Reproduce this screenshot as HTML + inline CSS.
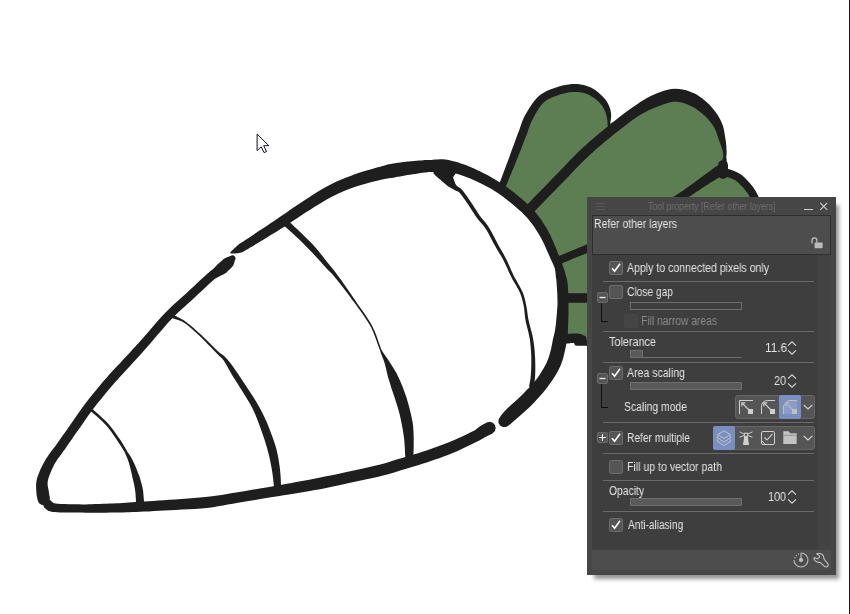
<!DOCTYPE html>
<html lang="en"><head><meta charset="utf-8"><title>Tool property - Refer other layers</title>
<style>
html,body{margin:0;padding:0}
body{width:850px;height:614px;background:#fff;position:relative;overflow:hidden;font-family:"Liberation Sans",sans-serif}
.art{position:absolute;left:0;top:0}
.edge{position:absolute;left:848.5px;top:0;width:1.5px;height:614px;background:#111}
.cursor{position:absolute;left:255.4px;top:131.8px}
.panel{position:absolute;left:587px;top:197px;width:249px;height:378px;background:#464646;box-shadow:5px 6px 4px -2px rgba(0,0,0,.42)}
.abs{position:absolute}
.hdr{position:absolute;left:5px;top:18px;width:237px;height:38px;background:#4d4d4d;border:1px solid #2e2e2e}
.body{position:absolute;left:5px;top:58px;width:226px;height:295px;background:#3e3e3e}
.track{position:absolute;left:231px;top:58px;width:13px;height:295px;background:#434343}
.foot{position:absolute;left:5px;top:352.6px;width:239px;height:20px;background:#4d4d4d}
.t,.ttl{position:absolute;white-space:nowrap;transform-origin:0 50%;will-change:transform}
.cb{position:absolute;width:12px;height:12px;border:1px solid #6b6b6b;background:#555;border-radius:2px;line-height:0}
.cb svg{position:absolute;left:-1px;top:-1px}
.cb.dis{border-color:#474747;background:#454545}
.sep{position:absolute;left:16px;width:211px;height:1px;background:#6a6a6a}
.sl{position:absolute;left:43px;width:110px;height:6px;border:1px solid #6e6e6e}
.sl.full{background:#5a5a5a}
.sl.empty{background:#3e3e3e}
.sl.part{border-color:transparent transparent #6e6e6e transparent}
.sl.part .knob{position:absolute;left:-1px;top:-1px;height:6px;border:1px solid #6e6e6e;background:#5a5a5a}
.spin{position:absolute}
.tg{position:absolute;width:9px;height:9px;border:1px solid #6b6b6b;background:#555;border-radius:2px;line-height:0}
.tg svg{position:absolute;left:-1px;top:-1px}
.tree{position:absolute;width:6px;border-left:1px solid #111;border-bottom:1px solid #111}
.grp{position:absolute;height:22px;border:1px solid #676767;background:#555;border-radius:3px}
.bt{position:absolute;height:24px}
.bt.sel{background:#7b8ec0;border-radius:2px}
</style></head>
<body>
<svg class="art" width="850" height="614" viewBox="0 0 850 614">
<path fill="#5d7d53" d="M503.0,184.0 L512.5,159.8 L522.0,134.8 L529.0,117.0 L541.0,99.5 L557.3,91.2 L574.8,87.9 L589.8,91.2 L601.5,100.0 L606.5,107.5 L608.6,114.0 L609.0,124.0 L636.0,111.3 L656.0,100.5 L675.4,95.2 L692.9,99.9 L707.8,111.1 L717.8,124.9 L722.3,139.8 L724.5,150.0 L724.5,168.0 L736.5,176.4 L744.0,182.7 L750.3,190.2 L754.0,196.5 L760.0,215.0 L760.0,300.0 L600.0,345.0 L585.8,340.0 L564.6,339.0 L561.0,326.8 L563.0,304.3 L562.2,284.4 L558.8,267.0 L553.7,254.7 L544.7,234.8 L532.2,216.1 L517.2,201.6 Z"/>
<g fill="#1e1e1e">
<path d="M506.3,185.3L507.4,182.7L508.9,179.1L510.6,174.8L512.5,170.2L514.5,165.6L516.2,161.2L517.9,157.0L519.6,152.7L521.3,148.4L522.9,144.1L524.5,140.1L526.0,136.3L527.3,132.9L528.3,129.7L529.3,126.9L530.3,124.2L531.4,121.7L532.8,119.0L534.3,116.0L536.0,112.9L537.9,109.9L539.8,107.1L541.7,104.5L543.7,102.5L545.8,100.8L548.1,99.3L550.5,98.1L553.1,97.0L555.8,95.9L558.6,95.0L561.3,94.1L564.1,93.4L566.9,92.8L569.7,92.3L572.3,92.0L574.8,91.9L577.2,92.0L579.5,92.2L581.8,92.6L584.0,93.1L586.2,93.8L588.2,94.6L590.2,95.5L592.1,96.7L594.1,98.1L596.0,99.5L597.7,101.0L599.2,102.3L600.3,103.4L601.2,104.5L601.9,105.5L602.6,106.6L603.2,107.7L603.8,108.8L604.4,109.8L604.8,110.7L605.2,111.6L605.6,112.6L605.9,113.5L606.1,114.5L606.4,115.4L606.6,116.2L606.8,117.1L607.0,118.1L607.1,119.0L607.3,120.0L607.4,121.0L607.4,122.1L607.5,123.3L607.6,124.4L607.6,125.3L607.7,125.9L607.8,126.4L608.1,126.8L608.6,127.0L609.1,126.9L609.5,126.6L609.7,126.1L609.9,125.4L610.1,124.5L610.2,123.5L610.4,122.3L610.6,121.1L610.7,120.0L610.9,119.0L611.0,118.0L611.1,116.9L611.1,115.8L611.1,114.7L611.1,113.5L610.9,112.4L610.7,111.2L610.5,110.0L610.1,108.8L609.7,107.5L609.2,106.2L608.6,104.9L608.0,103.7L607.3,102.3L606.3,100.8L605.2,99.2L603.8,97.7L602.2,96.1L600.5,94.4L598.4,92.6L596.2,90.8L593.9,89.2L591.4,87.8L588.9,86.7L586.2,85.8L583.5,85.0L580.7,84.4L577.8,84.1L574.8,83.9L571.7,84.0L568.6,84.4L565.4,84.9L562.2,85.6L559.0,86.4L556.0,87.4L553.1,88.4L550.1,89.5L547.1,90.8L544.1,92.4L541.1,94.3L538.3,96.5L535.7,99.2L533.2,102.2L531.0,105.4L528.9,108.7L527.0,111.9L525.2,115.0L523.7,118.1L522.4,121.1L521.3,124.0L520.3,126.9L519.3,130.0L518.0,133.3L516.6,137.1L515.1,141.2L513.5,145.4L511.9,149.8L510.3,154.2L508.8,158.4L507.2,162.7L505.4,167.4L503.7,172.1L502.1,176.4L500.7,180.1L499.7,182.7L499.5,184.5L500.3,186.2L501.7,187.3L503.5,187.5L505.2,186.7Z"/>
<path d="M532.9,213.0L536.4,209.4L541.4,204.3L547.2,198.3L553.4,191.9L559.4,185.8L564.6,180.5L569.0,175.9L573.1,171.6L577.0,167.6L580.7,163.7L584.5,159.9L588.4,156.2L592.6,152.4L596.8,148.6L601.1,144.9L605.4,141.3L609.8,137.8L614.0,134.3L618.3,130.9L622.7,127.5L626.9,124.2L631.1,121.1L635.1,118.2L638.9,115.7L642.5,113.5L645.9,111.7L649.1,110.1L652.2,108.7L655.2,107.4L658.4,106.3L661.6,105.1L664.7,103.9L667.7,103.0L670.5,102.3L673.1,101.8L675.5,101.7L677.8,101.8L680.2,102.2L682.6,102.8L685.1,103.6L687.6,104.6L690.0,105.7L692.4,106.8L694.8,108.1L697.2,109.7L699.5,111.4L701.8,113.2L703.9,115.0L705.8,116.8L707.7,118.7L709.4,120.7L711.0,122.7L712.5,124.8L713.8,126.9L714.9,128.9L715.9,131.2L716.8,133.6L717.6,136.0L718.4,138.4L719.1,140.6L719.9,142.6L720.5,144.3L721.1,145.9L721.6,147.5L722.1,148.9L722.5,150.3L722.8,151.6L723.0,152.7L723.1,153.8L723.2,154.9L723.3,155.9L723.3,156.9L723.0,158.0L722.6,159.0L722.2,160.1L721.8,161.1L721.4,161.9L721.0,162.5L721.2,164.1L722.1,165.3L723.5,166.0L725.1,165.8L726.3,164.9L727.0,163.5L726.8,162.8L726.7,161.9L726.6,160.8L726.6,159.6L726.5,158.3L726.3,157.1L726.4,156.0L726.5,154.9L726.6,153.7L726.6,152.5L726.6,151.2L726.5,149.7L726.4,148.2L726.4,146.6L726.2,144.8L726.0,143.0L725.8,141.1L725.5,139.0L725.1,136.8L724.7,134.3L724.3,131.6L723.7,128.7L722.9,125.8L721.8,122.9L720.6,120.2L719.1,117.5L717.5,114.8L715.7,112.2L713.8,109.7L711.7,107.2L709.5,104.8L707.1,102.5L704.5,100.2L701.7,98.0L698.8,95.9L695.8,94.1L692.7,92.7L689.6,91.4L686.2,90.3L682.7,89.4L679.1,88.9L675.3,88.7L671.4,89.0L667.7,89.8L664.0,90.8L660.5,92.0L657.0,93.3L653.6,94.7L650.3,96.3L647.0,98.1L643.6,100.0L640.3,102.1L636.8,104.4L633.1,106.9L629.1,109.7L625.0,112.8L620.7,116.1L616.4,119.5L612.0,123.0L607.8,126.5L603.4,130.0L599.1,133.6L594.7,137.3L590.2,141.1L585.9,144.9L581.6,148.8L577.5,152.8L573.6,156.7L569.8,160.6L565.9,164.7L561.8,169.0L557.4,173.5L552.2,178.8L546.3,185.0L540.1,191.3L534.2,197.3L529.3,202.4L525.7,206.0L524.5,208.3L524.5,210.9L525.8,213.1L528.1,214.3L530.7,214.3Z"/>
<path d="M718.0,165.0L718.0,166.5L718.0,168.0L718.0,169.5L718.0,171.0L718.0,172.5L718.0,174.0L718.7,176.5L720.5,178.3L723.0,179.0L725.5,178.3L727.3,176.5L728.0,174.0L728.0,172.5L728.0,171.0L728.0,169.5L728.0,168.0L728.0,166.5L728.0,165.0L727.3,162.5L725.5,160.7L723.0,160.0L720.5,160.7L718.7,162.5Z"/>
<path d="M715.9,166.5L714.5,167.6L712.6,169.0L710.3,170.7L707.8,172.6L705.1,174.6L702.4,176.6L699.6,178.6L696.7,180.8L693.6,183.0L690.4,185.3L687.2,187.6L684.0,189.9L680.4,192.3L676.4,194.9L672.3,197.5L668.4,200.0L665.2,202.1L662.9,203.6L661.5,205.1L661.0,207.2L661.6,209.1L663.1,210.5L665.2,211.0L667.1,210.4L669.5,208.9L672.8,206.9L676.7,204.5L680.8,201.9L684.9,199.3L688.6,196.9L692.1,194.8L695.4,192.6L698.7,190.4L701.9,188.3L704.9,186.3L707.8,184.4L710.6,182.6L713.4,180.9L716.1,179.2L718.5,177.7L720.6,176.4L722.1,175.5L724.0,173.4L724.5,170.6L723.5,167.9L721.4,166.0L718.6,165.5Z"/>
<path d="M724.7,176.3L725.9,176.7L727.6,177.2L729.5,177.8L731.4,178.5L733.2,179.2L734.6,179.9L735.7,180.6L736.8,181.4L737.9,182.3L738.9,183.3L740.0,184.4L741.1,185.5L742.2,186.6L743.3,187.8L744.3,189.0L745.3,190.2L746.2,191.4L747.1,192.6L747.8,193.5L748.3,194.4L748.8,195.1L749.2,196.0L749.8,197.0L750.4,198.2L751.2,199.9L752.1,202.0L753.1,204.2L754.0,206.4L754.8,208.2L755.3,209.6L756.6,211.2L758.5,212.0L760.6,211.7L762.2,210.4L763.0,208.5L762.7,206.4L762.1,205.1L761.3,203.3L760.4,201.1L759.4,198.8L758.5,196.6L757.6,194.8L756.9,193.4L756.3,192.2L755.7,191.1L755.0,190.0L754.3,189.0L753.5,187.8L752.6,186.6L751.6,185.3L750.5,183.9L749.3,182.5L748.1,181.2L746.9,179.9L745.7,178.7L744.5,177.5L743.2,176.3L741.7,175.1L740.2,174.0L738.4,172.9L736.4,171.9L734.2,171.0L732.1,170.3L730.1,169.6L728.4,169.1L727.3,168.7L725.2,168.6L723.4,169.5L722.2,171.2L722.1,173.3L723.0,175.1Z"/>
<path d="M559.9,264.2L563.2,262.8L567.9,260.9L573.4,258.6L579.1,256.3L584.3,254.2L588.5,252.5L591.7,251.3L594.4,250.3L596.6,249.4L598.5,248.8L600.1,248.2L601.3,247.8L603.1,246.6L603.9,244.7L603.8,242.7L602.6,240.9L600.7,240.1L598.7,240.2L597.4,240.7L595.9,241.2L593.9,241.9L591.6,242.8L588.8,243.8L585.5,245.1L581.3,246.8L576.0,248.9L570.4,251.3L564.9,253.5L560.2,255.4L556.9,256.8L555.2,258.1L554.4,260.0L554.7,262.0L556.0,263.7L557.9,264.5Z"/>
<path d="M566.2,302.7L571.8,302.7L577.5,302.7L583.1,302.7L588.7,302.7L594.4,302.7L600.0,302.7L602.4,302.1L604.1,300.4L604.7,298.0L604.1,295.6L602.4,293.9L600.0,293.3L594.4,293.3L588.7,293.3L583.1,293.3L577.5,293.3L571.8,293.3L566.2,293.3L563.9,293.9L562.1,295.6L561.5,298.0L562.1,300.4L563.9,302.1Z"/>
<path d="M565.5,343.7L566.3,343.6L567.3,343.5L568.6,343.4L569.9,343.2L571.1,343.1L572.3,343.0L573.4,342.9L574.6,342.9L575.8,342.8L576.9,342.7L577.9,342.7L578.8,342.7L579.5,342.6L580.1,342.5L580.7,342.4L581.3,342.4L581.9,342.3L582.4,342.2L584.2,342.1L585.7,341.1L586.4,339.4L586.3,337.6L585.3,336.1L583.6,335.4L583.3,335.1L582.8,334.9L582.2,334.6L581.3,334.2L580.3,334.0L579.2,333.7L578.1,333.6L576.9,333.6L575.6,333.5L574.3,333.5L573.0,333.5L571.7,333.6L570.4,333.7L568.9,333.8L567.5,333.9L566.3,334.1L565.2,334.2L564.5,334.3L562.2,335.2L560.7,337.1L560.3,339.5L561.2,341.8L563.1,343.3Z"/>
<path d="M577.0,345.8L577.8,345.8L578.8,345.8L580.0,345.8L581.3,345.8L582.7,345.8L584.0,345.8L585.3,345.8L586.8,345.9L588.4,345.9L589.8,345.9L591.0,346.0L591.9,346.0L593.4,345.6L594.6,344.6L595.0,343.1L594.6,341.6L593.6,340.4L592.1,340.0L591.2,340.0L590.0,339.9L588.5,339.9L587.0,339.9L585.4,339.8L584.0,339.8L582.7,339.8L581.3,339.8L580.0,339.8L578.8,339.8L577.7,339.8L577.0,339.8L575.5,340.2L574.4,341.3L574.0,342.8L574.4,344.3L575.5,345.4Z"/>
<path d="M231.3,253.4L231.9,253.5L232.7,253.6L233.6,253.5L234.6,253.5L235.6,253.4L236.6,253.3L237.4,253.2L238.2,253.2L239.0,253.1L240.1,252.8L241.4,252.4L243.2,251.7L245.2,250.5L247.6,249.2L250.2,247.6L253.1,245.9L256.2,244.0L259.5,242.0L263.2,239.8L267.3,237.3L271.6,234.6L276.0,231.9L280.5,229.1L284.8,226.4L289.0,223.6L293.2,220.8L297.4,218.0L301.5,215.3L305.6,212.6L309.8,209.9L313.9,207.3L318.1,204.7L322.2,202.2L326.3,199.8L330.4,197.5L334.4,195.4L338.4,193.5L342.4,191.7L346.5,190.1L350.5,188.5L354.6,187.1L358.6,185.7L362.8,184.4L367.3,183.2L371.7,182.0L376.0,181.0L380.0,180.1L383.3,179.3L385.8,178.7L387.5,178.4L388.8,178.2L390.0,178.1L391.4,177.9L393.2,177.7L395.4,177.3L397.7,176.8L400.1,176.4L402.6,175.9L405.1,175.5L407.5,175.1L410.0,174.7L412.7,174.3L415.4,173.9L418.0,173.5L420.4,173.1L422.6,172.8L424.5,172.6L426.0,172.4L427.4,172.3L428.7,172.1L430.2,172.0L432.0,171.9L434.0,171.7L436.1,171.6L438.2,171.4L440.1,171.3L442.1,171.3L444.2,171.5L446.6,171.7L449.2,172.1L451.9,172.6L454.7,173.3L457.6,174.0L460.6,174.9L463.6,176.0L466.9,177.2L470.2,178.6L473.5,180.1L476.8,181.6L480.0,183.1L483.0,184.6L485.9,186.1L488.7,187.6L491.5,189.1L494.2,190.8L497.0,192.6L499.9,194.5L502.8,196.6L505.6,198.7L508.5,200.9L511.3,203.2L514.0,205.4L516.6,207.7L519.1,209.9L521.6,212.1L523.9,214.4L526.2,216.8L528.4,219.3L530.5,222.0L532.7,224.8L534.8,227.8L536.8,230.9L538.7,234.0L540.5,237.1L542.2,240.2L543.9,243.6L545.4,247.0L546.9,250.4L548.3,253.6L549.6,256.5L550.7,259.0L551.8,261.3L552.7,263.2L553.5,265.0L554.2,266.7L554.8,268.3L555.1,269.9L555.3,271.3L555.5,272.6L555.6,274.0L555.7,275.4L555.9,277.0L556.1,278.4L556.3,279.6L556.4,280.5L556.5,281.6L556.6,282.9L556.7,284.8L556.9,287.4L557.1,290.4L557.3,293.7L557.4,297.2L557.5,300.8L557.5,304.2L557.3,307.8L557.0,311.7L556.7,315.6L556.3,319.5L556.0,323.1L555.6,326.3L555.2,328.9L554.9,330.9L554.6,332.6L554.2,334.2L553.8,336.1L553.1,338.6L552.5,341.8L551.8,345.4L551.0,349.2L550.0,353.0L549.0,356.5L547.8,359.8L546.5,362.9L544.9,366.0L543.1,369.2L541.2,372.3L539.2,375.4L537.1,378.4L534.8,381.2L532.4,384.1L529.9,386.9L527.2,389.6L524.6,392.3L522.0,394.9L519.6,397.3L517.0,399.7L514.4,402.0L511.8,404.3L509.4,406.4L507.2,408.4L505.4,410.4L503.9,412.1L502.5,413.7L501.4,415.1L500.6,416.3L500.0,417.1L498.5,419.8L498.5,423.0L500.1,425.6L502.8,427.1L506.0,427.1L508.6,425.5L509.5,424.8L510.6,423.9L511.9,422.8L513.3,421.5L515.0,420.1L516.8,418.6L518.8,416.8L521.1,414.8L523.7,412.5L526.4,410.0L529.2,407.4L532.0,404.7L534.6,402.0L537.3,399.1L540.0,396.1L542.8,393.0L545.4,389.7L547.9,386.4L550.3,383.1L552.7,379.7L554.9,376.3L557.0,372.7L559.0,368.9L560.8,365.0L562.3,360.9L563.6,356.6L564.6,352.3L565.5,348.3L566.2,344.6L566.9,341.4L567.3,338.7L567.6,336.4L567.8,334.3L567.9,332.2L567.9,330.0L568.0,327.3L568.2,324.0L568.3,320.3L568.4,316.3L568.5,312.2L568.5,308.2L568.5,304.4L568.5,300.6L568.4,296.9L568.3,293.2L568.1,289.8L567.9,286.6L567.7,284.0L567.4,281.7L567.1,280.0L566.7,278.5L566.4,277.3L566.0,276.2L565.7,275.0L565.3,273.7L565.0,272.3L564.6,270.8L564.1,269.2L563.5,267.5L562.8,265.7L562.2,263.7L561.5,261.8L560.7,259.8L559.9,257.7L558.9,255.4L557.8,252.9L556.7,250.0L555.3,246.8L553.9,243.3L552.3,239.7L550.7,236.0L548.9,232.5L547.0,229.1L545.0,225.8L542.9,222.4L540.7,219.1L538.4,216.0L536.0,212.9L533.6,210.1L531.0,207.4L528.4,204.9L525.8,202.5L523.1,200.1L520.4,197.8L517.6,195.4L514.7,193.1L511.7,190.7L508.6,188.5L505.6,186.3L502.6,184.2L499.6,182.3L496.7,180.4L493.7,178.7L490.8,177.0L487.8,175.3L484.6,173.7L481.4,172.1L478.0,170.4L474.5,168.8L471.0,167.2L467.6,165.8L464.2,164.5L460.9,163.4L457.7,162.3L454.6,161.4L451.5,160.7L448.5,160.0L445.6,159.5L442.7,159.3L439.9,159.3L437.4,159.4L435.1,159.6L433.1,159.8L431.2,159.9L429.5,160.0L428.0,160.0L426.5,160.1L425.0,160.1L423.3,160.2L421.4,160.4L419.1,160.5L416.6,160.7L413.9,160.9L411.1,161.2L408.3,161.4L405.7,161.7L403.1,162.1L400.4,162.4L397.9,162.8L395.3,163.2L393.0,163.6L390.8,163.9L389.0,164.3L387.6,164.6L386.2,165.0L384.6,165.4L382.6,166.0L380.1,166.7L376.8,167.6L372.9,168.7L368.5,170.0L363.9,171.3L359.2,172.8L354.8,174.3L350.5,175.9L346.3,177.5L342.0,179.2L337.8,181.1L333.5,183.0L329.2,185.2L324.9,187.5L320.6,190.0L316.4,192.6L312.2,195.3L308.0,198.0L303.8,200.7L299.6,203.4L295.5,206.3L291.3,209.1L287.2,212.0L283.1,214.8L279.0,217.6L274.8,220.4L270.5,223.3L266.2,226.2L262.0,229.0L258.0,231.6L254.5,234.0L251.2,236.2L248.2,238.2L245.4,240.0L242.9,241.7L240.7,243.1L238.8,244.3L237.5,245.4L236.6,246.2L236.0,246.7L235.6,247.2L235.0,247.7L234.4,248.3L233.7,249.0L232.9,249.7L232.2,250.3L231.6,250.9L231.1,251.5L230.7,252.0L230.4,252.2L230.3,252.6L230.3,253.0L230.5,253.3L230.9,253.4Z"/>
<path d="M486.6,422.5L485.9,422.9L485.0,423.4L483.9,424.0L482.6,424.7L481.3,425.5L479.9,426.3L478.7,427.2L477.6,428.1L476.8,428.7L475.9,429.5L474.5,430.4L472.3,431.6L469.2,433.1L465.3,434.9L461.0,436.9L456.5,439.0L452.0,440.9L447.7,442.7L443.7,444.3L439.6,445.8L435.5,447.3L431.4,448.8L427.2,450.2L423.1,451.5L418.9,452.9L414.7,454.2L410.4,455.5L406.2,456.7L402.1,457.9L398.3,459.0L395.1,460.0L392.7,460.8L390.6,461.6L388.3,462.3L385.0,463.2L380.3,464.4L373.7,466.0L365.3,467.9L356.0,470.0L346.6,472.0L337.9,473.9L330.6,475.5L325.0,476.6L320.4,477.6L316.5,478.3L312.9,479.0L309.2,479.7L305.0,480.4L300.5,481.3L296.2,482.1L291.7,483.0L287.0,483.8L281.8,484.8L276.0,485.8L269.2,487.0L261.5,488.3L253.4,489.6L245.3,491.0L237.7,492.2L231.1,493.3L225.8,494.2L221.4,494.9L217.6,495.5L213.9,496.0L210.0,496.5L205.4,497.0L200.0,497.6L194.0,498.1L187.8,498.5L181.4,499.0L175.2,499.4L169.4,499.8L163.9,500.2L158.5,500.5L153.4,500.9L148.4,501.2L143.8,501.5L139.4,501.8L135.5,502.1L132.1,502.3L128.9,502.6L125.8,502.8L122.8,503.0L119.6,503.2L116.3,503.3L113.0,503.4L109.6,503.6L106.3,503.7L103.1,503.8L99.9,503.9L96.9,504.0L94.2,504.1L91.5,504.2L88.7,504.3L85.7,504.4L82.4,504.4L78.5,504.3L74.0,504.3L69.3,504.2L64.8,504.1L60.8,503.9L57.7,503.8L55.6,503.5L54.2,503.2L53.4,502.9L52.8,502.6L52.1,502.3L51.3,501.9L48.9,501.9L46.7,503.1L45.4,505.2L45.4,507.6L46.6,509.8L48.7,511.1L49.1,511.1L49.7,511.2L50.9,511.5L52.5,511.9L54.6,512.1L57.1,512.2L60.5,512.4L64.6,512.5L69.2,512.5L73.9,512.6L78.4,512.6L82.4,512.6L85.7,512.7L88.8,512.7L91.6,512.7L94.3,512.7L97.1,512.7L100.1,512.7L103.3,512.7L106.5,512.7L109.9,512.6L113.2,512.6L116.6,512.5L120.0,512.4L123.2,512.4L126.3,512.3L129.4,512.2L132.6,512.1L136.1,512.0L140.0,511.8L144.3,511.6L149.0,511.4L154.0,511.1L159.2,510.8L164.5,510.5L170.0,510.2L175.8,509.9L182.0,509.6L188.4,509.3L194.8,508.9L200.9,508.5L206.6,508.0L211.4,507.4L215.5,506.8L219.3,506.1L223.2,505.4L227.6,504.6L232.9,503.7L239.4,502.6L247.0,501.3L255.1,500.0L263.3,498.6L271.0,497.3L277.8,496.2L283.6,495.3L288.8,494.5L293.6,493.7L298.1,493.0L302.5,492.3L307.0,491.6L311.2,490.8L315.0,490.1L318.7,489.4L322.6,488.7L327.3,487.7L333.0,486.5L340.3,485.0L349.0,483.1L358.4,481.1L367.8,479.1L376.2,477.2L383.1,475.6L388.0,474.3L391.5,473.3L394.2,472.5L396.5,471.7L398.7,470.9L401.7,470.0L405.4,468.9L409.4,467.7L413.7,466.5L418.0,465.2L422.4,463.8L426.7,462.5L430.9,461.1L435.1,459.6L439.3,458.2L443.6,456.6L447.8,455.0L452.1,453.3L456.5,451.4L461.2,449.3L465.8,447.1L470.1,445.0L474.0,443.0L477.3,441.4L479.8,440.2L481.8,439.1L483.3,438.3L484.4,437.6L485.2,437.1L486.1,436.7L487.2,436.1L488.4,435.4L489.6,434.9L490.7,434.3L491.7,433.9L492.4,433.5L494.8,431.3L495.7,428.2L495.0,425.1L492.8,422.7L489.7,421.8Z"/>
<path d="M49.9,497.7L49.8,497.0L49.5,496.1L49.3,495.1L49.1,494.1L49.0,493.0L48.8,491.6L48.5,489.8L48.1,488.0L47.8,486.2L47.6,484.5L47.6,482.9L47.8,481.0L48.3,478.8L49.1,476.2L50.2,473.4L51.4,470.4L52.8,467.5L54.1,464.8L55.6,462.2L57.3,459.6L59.2,457.0L61.1,454.4L63.1,451.6L65.1,448.9L66.9,446.2L68.6,443.7L70.4,441.3L72.2,438.7L74.1,435.8L76.4,432.6L79.0,429.0L81.8,424.9L84.7,420.7L87.8,416.3L90.9,412.0L94.1,407.8L97.3,403.6L100.7,399.4L104.1,395.2L107.6,391.1L111.0,387.0L114.4,383.1L117.6,379.4L120.8,375.9L124.0,372.5L127.2,369.1L130.3,365.7L133.4,362.3L136.4,359.1L139.2,356.0L141.9,352.9L144.7,349.8L147.6,346.5L150.7,343.0L154.0,339.1L157.4,335.1L161.0,330.9L164.6,326.7L168.2,322.6L171.9,318.7L175.7,314.8L179.7,311.0L183.9,307.2L188.0,303.5L192.0,299.9L195.7,296.5L199.1,293.3L202.5,290.2L205.6,287.2L208.5,284.5L211.1,282.2L213.2,280.3L214.8,279.0L215.8,278.3L216.4,278.0L216.9,277.7L217.7,277.3L218.8,276.7L219.9,276.1L221.0,275.6L222.1,275.0L223.3,274.4L224.5,273.7L225.8,272.9L227.0,271.9L228.1,270.8L229.3,269.7L230.4,268.7L231.5,267.6L232.5,266.6L233.1,265.4L233.7,264.3L234.1,263.2L234.4,262.2L234.6,261.4L234.7,260.7L235.5,259.2L235.4,257.5L234.5,256.1L233.0,255.3L231.3,255.4L229.9,256.3L229.2,256.4L228.4,256.7L227.5,257.1L226.5,257.5L225.6,257.9L224.5,258.4L223.6,259.1L222.6,260.0L221.5,261.0L220.3,261.9L219.2,262.9L218.2,263.7L217.4,264.6L216.6,265.4L215.8,266.3L214.9,267.2L214.1,268.1L213.2,268.9L212.6,269.5L212.1,269.8L211.4,270.3L210.4,271.1L209.1,272.2L207.4,273.7L205.2,275.7L202.6,278.1L199.6,280.8L196.5,283.8L193.1,286.9L189.7,290.1L186.1,293.4L182.1,296.9L178.0,300.7L173.7,304.6L169.6,308.5L165.5,312.5L161.7,316.6L157.9,320.8L154.2,325.1L150.6,329.3L147.2,333.3L143.9,337.0L140.8,340.5L137.9,343.7L135.1,346.8L132.3,349.8L129.5,352.9L126.6,356.1L123.5,359.3L120.4,362.7L117.2,366.0L113.9,369.5L110.6,373.1L107.2,376.9L103.8,380.8L100.3,384.9L96.8,389.2L93.3,393.5L89.8,397.8L86.5,402.0L83.3,406.3L80.1,410.8L76.9,415.2L74.0,419.5L71.2,423.5L68.6,427.2L66.4,430.4L64.4,433.2L62.5,435.8L60.8,438.3L59.1,440.8L57.3,443.3L55.4,445.9L53.4,448.6L51.3,451.2L49.3,454.0L47.3,456.9L45.5,459.8L43.7,462.9L42.1,466.0L40.5,469.2L39.2,472.4L38.0,475.5L37.0,478.6L36.4,481.6L36.1,484.5L36.1,487.1L36.2,489.4L36.3,491.2L36.4,492.8L36.6,494.5L36.8,496.2L37.1,497.6L37.4,498.8L37.6,499.7L37.7,500.3L39.1,503.2L41.9,504.9L45.1,505.1L48.0,503.7L49.7,500.9Z"/>
<path d="M91.1,411.5L92.9,413.0L95.3,415.1L98.1,417.6L101.1,420.3L103.9,423.1L106.5,425.8L108.8,428.6L111.1,431.6L113.3,434.7L115.4,437.8L117.4,440.7L119.0,443.2L120.4,445.2L121.5,446.9L122.4,448.4L123.2,449.7L124.0,451.1L124.9,452.6L125.6,454.3L126.3,455.9L127.0,457.5L127.6,459.1L128.3,460.9L128.9,462.8L129.5,465.1L130.2,467.7L130.9,470.4L131.5,473.1L132.1,475.8L132.6,478.3L133.2,480.5L133.7,482.7L134.2,484.7L134.5,486.7L134.9,488.7L135.1,490.6L135.4,492.6L135.6,494.9L135.7,497.2L135.9,499.3L135.9,501.1L136.0,502.5L136.7,504.4L138.2,505.8L140.3,506.2L142.2,505.5L143.6,504.0L144.0,501.9L143.9,500.6L143.8,498.8L143.6,496.6L143.4,494.2L143.2,491.8L142.9,489.4L142.4,487.2L141.9,485.1L141.3,483.0L140.7,480.8L140.1,478.6L139.4,476.3L138.4,473.9L137.4,471.3L136.4,468.6L135.3,465.9L134.2,463.4L133.1,461.2L132.1,459.2L131.1,457.4L130.1,455.8L129.1,454.3L128.2,452.9L127.1,451.4L126.3,449.8L125.5,448.4L124.7,447.0L123.8,445.4L122.7,443.7L121.4,441.6L119.7,439.1L117.7,436.3L115.6,433.2L113.3,430.0L110.9,426.9L108.5,424.0L105.9,421.2L102.9,418.4L99.8,415.6L97.0,413.1L94.6,411.0L92.9,409.5L92.3,409.2L91.6,409.3L91.0,409.6L90.7,410.2L90.8,410.9Z"/>
<path d="M167.0,316.0L167.6,316.2L168.4,316.6L169.4,317.0L170.6,317.5L171.9,318.0L173.3,318.6L174.8,319.1L176.5,319.6L178.2,320.1L180.1,320.7L182.0,321.5L184.1,322.7L186.4,324.3L188.8,326.3L191.4,328.4L194.0,330.8L196.7,333.2L199.4,335.7L202.1,338.3L205.0,341.2L207.8,344.2L210.7,347.1L213.2,349.8L215.5,352.1L217.4,354.0L218.9,355.5L220.2,356.7L221.4,357.8L222.5,359.1L223.7,360.6L225.0,362.5L226.2,364.5L227.4,366.7L228.7,369.1L230.1,371.6L231.6,374.2L233.3,376.9L235.1,379.8L237.0,382.8L239.0,385.9L240.9,388.9L242.7,391.8L244.4,394.6L246.1,397.3L247.7,399.9L249.3,402.5L250.8,405.2L252.3,408.0L253.7,411.0L255.1,414.1L256.4,417.3L257.7,420.5L259.0,423.9L260.3,427.4L261.6,431.2L263.0,435.2L264.4,439.3L265.7,443.4L266.9,447.4L267.9,451.2L268.8,454.6L269.6,457.9L270.3,461.2L270.9,464.4L271.5,467.5L272.0,470.6L272.5,473.7L272.9,477.0L273.3,480.2L273.6,483.2L273.9,485.7L274.1,487.6L274.7,489.3L276.1,490.5L277.9,490.8L279.6,490.2L280.8,488.8L281.1,487.0L281.0,485.2L280.9,482.6L280.8,479.6L280.6,476.2L280.3,472.8L280.0,469.4L279.6,466.2L279.1,463.0L278.6,459.7L278.0,456.2L277.2,452.6L276.3,448.8L275.2,444.9L273.8,440.8L272.3,436.6L270.8,432.4L269.3,428.4L267.7,424.6L266.2,421.0L264.6,417.6L263.0,414.3L261.4,411.1L259.8,408.0L258.1,405.0L256.4,402.0L254.7,399.2L253.0,396.6L251.3,393.9L249.5,391.3L247.7,388.6L245.9,385.7L243.9,382.7L241.9,379.7L239.9,376.7L238.0,373.8L236.2,371.2L234.5,368.8L232.9,366.5L231.3,364.3L229.7,362.2L228.1,360.2L226.5,358.4L224.9,356.8L223.5,355.6L222.1,354.5L220.6,353.4L219.0,352.2L217.1,350.5L214.8,348.3L212.1,345.6L209.3,342.7L206.3,339.8L203.4,337.0L200.6,334.3L197.9,331.9L195.2,329.5L192.5,327.1L189.9,325.0L187.4,323.0L185.1,321.3L183.0,319.8L181.0,318.7L179.2,317.7L177.5,316.9L176.0,316.1L174.7,315.4L173.5,314.7L172.3,314.0L171.2,313.4L170.3,312.8L169.6,312.4L169.0,312.0L167.9,311.8L166.8,312.1L166.0,313.0L165.8,314.1L166.1,315.2Z"/>
<path d="M284.9,226.5L286.4,227.8L288.4,229.6L290.8,231.8L293.4,234.1L295.9,236.4L298.2,238.6L300.3,240.6L302.3,242.5L304.3,244.5L306.3,246.5L308.4,248.7L310.6,251.0L313.1,253.6L315.8,256.5L318.6,259.6L321.3,262.6L323.9,265.5L326.2,268.0L328.0,269.9L329.4,271.3L330.6,272.4L331.8,273.6L333.4,275.4L335.5,277.9L338.3,281.5L341.7,285.8L345.3,290.6L349.1,295.6L352.7,300.4L356.0,304.8L358.8,308.8L361.6,312.6L364.2,316.3L366.6,319.9L368.9,323.5L371.0,327.2L372.8,331.1L374.5,335.2L376.0,339.3L377.4,343.3L378.7,347.0L380.0,350.3L380.9,353.2L381.8,355.6L382.6,357.7L383.4,359.6L384.1,361.5L384.7,363.6L385.3,365.8L385.9,368.0L386.4,370.2L386.9,372.4L387.4,374.6L387.9,376.8L388.6,378.9L389.3,381.0L389.9,383.1L390.6,385.2L391.2,387.4L391.8,389.5L392.6,391.6L393.3,393.7L394.0,395.8L394.7,397.8L395.4,399.9L396.0,401.9L396.7,403.9L397.3,405.9L397.9,408.0L398.5,410.0L399.0,412.0L399.6,414.0L400.0,416.0L400.5,418.0L400.9,420.0L401.3,422.0L401.7,424.0L402.1,426.1L402.5,428.3L402.9,430.6L403.3,432.9L403.6,435.3L404.0,437.7L404.3,440.2L404.5,443.1L404.7,446.3L404.9,449.6L405.0,452.7L405.2,455.4L405.3,457.3L405.9,459.3L407.3,460.8L409.3,461.3L411.3,460.7L412.8,459.3L413.3,457.3L413.4,455.4L413.5,452.7L413.6,449.5L413.7,446.1L413.7,442.8L413.7,439.8L413.7,437.0L413.6,434.4L413.5,431.8L413.3,429.3L413.2,426.9L412.9,424.5L412.6,422.1L412.1,419.9L411.7,417.7L411.2,415.6L410.8,413.5L410.2,411.4L409.7,409.2L409.2,407.1L408.6,404.9L408.0,402.8L407.4,400.7L406.8,398.5L406.1,396.3L405.3,394.2L404.5,392.0L403.7,389.9L403.0,387.8L402.2,385.7L401.3,383.7L400.4,381.6L399.5,379.6L398.6,377.5L397.6,375.4L396.7,373.4L395.5,371.4L394.3,369.4L393.1,367.4L391.8,365.4L390.6,363.4L389.3,361.4L388.0,359.5L386.8,357.8L385.5,356.1L384.3,354.3L382.9,352.2L381.4,349.7L380.2,346.5L378.9,342.8L377.5,338.8L376.0,334.6L374.3,330.4L372.4,326.4L370.3,322.6L368.0,319.0L365.6,315.3L363.0,311.6L360.3,307.8L357.4,303.8L354.4,299.2L351.0,294.2L347.4,289.1L343.9,284.1L340.8,279.6L338.1,275.9L336.1,273.2L334.7,271.2L333.5,269.8L332.4,268.5L331.2,267.0L329.6,265.0L327.5,262.4L325.1,259.4L322.6,256.2L320.0,252.9L317.4,249.8L315.0,247.0L312.8,244.5L310.6,242.3L308.5,240.2L306.5,238.3L304.5,236.3L302.4,234.2L300.1,232.0L297.6,229.6L295.0,227.2L292.7,224.9L290.7,223.1L289.3,221.7L287.8,220.9L286.1,221.0L284.7,221.9L283.9,223.4L284.0,225.1Z"/>
<path d="M434.2,174.2L434.9,175.0L436.0,176.0L437.4,177.2L438.8,178.4L440.2,179.6L441.4,180.8L442.6,181.7L443.7,182.7L444.8,183.6L445.9,184.5L446.9,185.4L447.9,186.3L449.0,186.9L450.2,187.6L451.3,188.2L452.5,188.8L453.6,189.5L454.7,190.1L455.8,190.7L456.7,191.0L457.4,191.2L458.0,191.5L458.6,191.9L459.6,192.8L460.8,194.2L462.2,196.1L463.7,198.2L465.4,200.5L466.9,202.8L468.5,205.0L469.9,207.2L471.3,209.4L472.7,211.6L474.1,213.8L475.6,216.0L477.0,218.1L478.5,220.0L479.9,221.6L481.3,223.2L482.7,224.7L484.1,226.5L485.5,228.5L487.1,231.1L488.8,234.1L490.5,237.4L492.3,240.7L494.0,243.9L495.6,246.8L497.1,249.4L498.5,251.7L499.8,253.9L501.1,256.1L502.4,258.3L503.7,260.7L504.9,263.2L506.2,265.9L507.4,268.6L508.6,271.4L509.9,274.2L511.3,276.9L512.7,279.7L514.3,282.5L516.0,285.3L517.5,288.0L518.9,290.6L520.1,293.1L521.0,295.5L521.8,297.8L522.4,300.0L522.9,302.2L523.4,304.4L523.8,306.6L524.2,308.8L524.4,310.9L524.6,313.0L524.8,315.3L525.1,317.7L525.5,320.3L526.1,323.2L526.9,326.3L527.7,329.5L528.5,332.7L529.2,335.9L529.8,339.1L530.2,342.2L530.5,345.3L530.8,348.4L531.0,351.5L531.2,354.6L531.3,357.7L531.3,360.9L531.3,364.2L531.2,367.6L531.1,370.8L530.9,373.8L530.7,376.3L530.5,378.5L530.2,380.4L529.9,382.0L529.6,383.4L529.4,384.6L529.2,385.6L529.3,386.7L529.9,387.7L531.0,388.2L532.1,388.1L533.1,387.5L533.6,386.4L533.8,385.5L534.0,384.3L534.3,382.8L534.6,381.1L534.9,379.0L535.1,376.7L535.2,374.0L535.3,371.0L535.3,367.7L535.3,364.2L535.2,360.8L535.1,357.5L534.9,354.4L534.7,351.2L534.4,348.0L534.0,344.9L533.6,341.7L533.0,338.5L532.4,335.3L531.6,332.0L530.7,328.7L529.9,325.5L529.1,322.5L528.5,319.7L528.0,317.2L527.7,314.9L527.4,312.7L527.1,310.6L526.8,308.4L526.4,306.2L525.9,303.9L525.4,301.6L524.9,299.3L524.3,297.0L523.5,294.6L522.5,292.1L521.3,289.4L519.9,286.7L518.3,283.9L516.7,281.1L515.2,278.4L513.7,275.7L512.5,273.0L511.2,270.2L510.0,267.4L508.8,264.7L507.6,261.9L506.3,259.3L505.0,256.9L503.8,254.6L502.5,252.3L501.2,250.1L499.8,247.8L498.4,245.2L496.9,242.3L495.2,239.1L493.5,235.8L491.8,232.5L490.1,229.4L488.5,226.7L486.9,224.4L485.4,222.4L484.0,220.8L482.6,219.2L481.3,217.7L480.0,215.9L478.6,213.9L477.2,211.8L475.8,209.6L474.4,207.4L473.0,205.2L471.5,203.0L470.0,200.7L468.4,198.4L466.8,196.1L465.2,193.9L463.8,191.9L462.4,190.2L461.3,189.0L460.2,188.1L459.2,187.5L458.4,187.1L457.9,186.8L457.3,186.3L456.6,185.6L455.8,184.7L454.9,183.7L454.0,182.7L453.1,181.7L452.1,180.7L450.9,180.0L449.7,179.2L448.4,178.5L447.2,177.8L445.9,177.0L444.6,176.2L443.1,175.5L441.4,174.6L439.8,173.7L438.2,172.9L436.8,172.2L435.8,171.8L435.1,171.5L434.4,171.6L433.8,172.2L433.5,172.9L433.6,173.6Z"/>
<path d="M432.5,171.5 L440,166 L456,173 L453,177.2 L457,188.6 L451,185.5 Z"/>
<circle cx="48" cy="504.5" r="4.8"/>
</g></svg>
<div class="edge"></div>
<svg class="cursor" width="16" height="22" viewBox="0 0 16 22"><path d="M2.1 2 V18.6 L6.2 14.8 L9 20.6 L11.5 19.5 L8.7 13.7 H13.8 Z" fill="#fff" stroke="#10101a" stroke-width="1"/></svg>
<div class="panel">
<svg class="abs" style="left:9px;top:5px" width="10" height="9" viewBox="0 0 10 9"><path d="M0 1.5H9M0 4.5H9M0 7.5H9" stroke="#585858" stroke-width="1"/></svg>
<svg class="abs" style="left:217px;top:5px" width="24" height="10" viewBox="0 0 24 10"><path d="M0 7.5H9" stroke="#d0d0d0" stroke-width="1"/><path d="M16.3 0.8L23.2 7.8M23.2 0.8L16.3 7.8" stroke="#d0d0d0" stroke-width="1.1"/></svg>
<div class="hdr"></div>
<svg class="abs" style="left:224.3px;top:39.6px" width="12" height="12" viewBox="0 0 12 12"><path d="M1 6.5 V3.2 A2.4 2.4 0 0 1 5.8 3.2 V5.5" fill="none" stroke="#c4c4c4" stroke-width="1.2"/><rect x="3.6" y="5.4" width="8" height="5.8" rx="0.8" fill="#bdbdbd"/></svg>
<div class="body"></div><div class="track"></div><div class="foot"></div>
<div class="cb" style="left:22px;top:64px"><svg width="14" height="14" viewBox="0 0 14 14"><path d="M3 7.2 L5.6 10.3 L11 2.8" fill="none" stroke="#fff" stroke-width="1.6"/></svg></div>
<div class="sep" style="top:84.0px"></div>
<div class="tg" style="left:10px;top:95px"><svg width="11" height="11" viewBox="0 0 11 11"><path d="M2.5 5.5 H8.5" stroke="#eee" stroke-width="1.3"/></svg></div>
<div class="cb" style="left:22px;top:88px"></div>
<div class="sl empty" style="top:104.5px"></div>
<div class="tree" style="left:14px;top:106px;height:18px"></div>
<div class="cb dis" style="left:37px;top:117px"></div>
<div class="sep" style="top:134.0px"></div>
<div class="sl part" style="top:152.5px"><div class="knob" style="width:11px"></div></div>
<svg class="spin" style="left:200px;top:144px" width="10" height="15" viewBox="0 0 10 15"><path d="M1 4.7 L5 0.8 L9 4.7 M1 9.3 L5 13.2 L9 9.3" fill="none" stroke="#d6d6d6" stroke-width="1.1"/></svg>
<div class="sep" style="top:165.0px"></div>
<div class="tg" style="left:10px;top:176px"><svg width="11" height="11" viewBox="0 0 11 11"><path d="M2.5 5.5 H8.5" stroke="#eee" stroke-width="1.3"/></svg></div>
<div class="cb" style="left:22px;top:169px"><svg width="14" height="14" viewBox="0 0 14 14"><path d="M3 7.2 L5.6 10.3 L11 2.8" fill="none" stroke="#fff" stroke-width="1.6"/></svg></div>
<div class="sl full" style="top:185.3px"></div>
<svg class="spin" style="left:200px;top:177px" width="10" height="15" viewBox="0 0 10 15"><path d="M1 4.7 L5 0.8 L9 4.7 M1 9.3 L5 13.2 L9 9.3" fill="none" stroke="#d6d6d6" stroke-width="1.1"/></svg>
<div class="tree" style="left:14px;top:187px;height:23px"></div>
<div class="grp" style="left:148px;top:198px;width:78px"></div>
<div class="bt" style="left:148px;top:198px;width:22px"><div style="position:absolute;left:4.0px;top:5.0px;line-height:0"><svg width="14" height="14" viewBox="0 0 14 14"><path d="M0.5 14 V0.5 H14" fill="none" stroke="#cfcfcf" stroke-width="1"/><path d="M10 10 L3.4 3.4" stroke="#cfcfcf" stroke-width="1.2" fill="none"/><path d="M2.8 6.2 V2.8 H6.2" fill="none" stroke="#cfcfcf" stroke-width="1.2"/><rect x="9" y="9" width="5" height="5" fill="#cfcfcf"/></svg></div></div>
<div class="bt" style="left:170px;top:198px;width:22px"><div style="position:absolute;left:4.0px;top:5.0px;line-height:0"><svg width="14" height="14" viewBox="0 0 14 14"><path d="M0.5 14 V7 Q0.5 0.5 7 0.5 H14" fill="none" stroke="#cfcfcf" stroke-width="1"/><path d="M10 10 L3.4 3.4" stroke="#cfcfcf" stroke-width="1.2" fill="none"/><path d="M2.8 6.2 V2.8 H6.2" fill="none" stroke="#cfcfcf" stroke-width="1.2"/><rect x="9" y="9" width="5" height="5" fill="#cfcfcf"/></svg></div></div>
<div class="bt sel" style="left:192px;top:198px;width:22px"><div style="position:absolute;left:4.0px;top:5.0px;line-height:0"><svg width="14" height="14" viewBox="0 0 14 14"><path d="M0.5 14 V5.6 L5 0.5 H14 V14 Z" fill="rgba(255,255,255,0.13)"/><path d="M0.5 14 V5.6 L5 0.5 H14" fill="none" stroke="#c2bdb6" stroke-width="1"/><path d="M10 10 L3.4 3.4" stroke="#b7b8c4" stroke-width="1.2" fill="none"/><path d="M2.8 6.2 V2.8 H6.2" fill="none" stroke="#b7b8c4" stroke-width="1.2"/><rect x="9" y="9" width="5" height="5" fill="#c3c0bd"/></svg></div></div>
<div class="bt" style="left:214px;top:198px;width:14px"><div style="position:absolute;left:2.0px;top:8.6px;line-height:0"><svg width="10" height="6" viewBox="0 0 10 6"><path d="M0.6 0.8 L5 5 L9.4 0.8" fill="none" stroke="#d8d8d8" stroke-width="1.1"/></svg></div></div>
<div class="sep" style="top:225.0px"></div>
<div class="tg" style="left:10px;top:235px"><svg width="11" height="11" viewBox="0 0 11 11"><path d="M2 5.5 H9 M5.5 2 V9" stroke="#eee" stroke-width="1.1"/></svg></div>
<div class="cb" style="left:22px;top:234px"><svg width="14" height="14" viewBox="0 0 14 14"><path d="M3 7.2 L5.6 10.3 L11 2.8" fill="none" stroke="#fff" stroke-width="1.6"/></svg></div>
<div class="grp" style="left:126px;top:229px;width:100px"></div>
<div class="bt sel" style="left:126px;top:229px;width:22px"><div style="position:absolute;left:4.0px;top:4.0px;line-height:0"><svg width="14" height="17" viewBox="0 0 14 17"><g fill="none" stroke="#c3c4cc" stroke-width="1"><path d="M7 0.8 L13.5 4.7 L7 8.5 L0.5 4.7 Z"/><path d="M0.5 6.2 V8 L7 12.1 L13.5 8 V6.2"/><path d="M0.5 9.6 V11.4 L7 15.5 L13.5 11.4 V9.6"/></g></svg></div></div>
<div class="bt" style="left:148px;top:229px;width:22px"><div style="position:absolute;left:4.0px;top:5.0px;line-height:0"><svg width="14" height="14" viewBox="0 0 14 14"><path d="M5.2 5.5 H8.8 L10 14 H4 Z" fill="#cfcfcf"/><rect x="5.4" y="2.2" width="3.2" height="3.2" fill="none" stroke="#cfcfcf" stroke-width="1"/><path d="M5 3 L0.5 0.8 M5 4.6 L0.5 6.2 M9 3 L13.5 0.8 M9 4.6 L13.5 6.2" stroke="#cfcfcf" stroke-width="1"/></svg></div></div>
<div class="bt" style="left:170px;top:229px;width:22px"><div style="position:absolute;left:4.0px;top:5.0px;line-height:0"><svg width="14" height="14" viewBox="0 0 14 14"><rect x="0.5" y="0.5" width="13" height="13" rx="1.5" fill="none" stroke="#cfcfcf" stroke-width="1"/><path d="M3.5 6.5 L6 9 L11.5 2.8" fill="none" stroke="#cfcfcf" stroke-width="1.1"/><path d="M0.8 9.8 L4.2 13.2" stroke="#cfcfcf" stroke-width="1"/></svg></div></div>
<div class="bt" style="left:192px;top:229px;width:22px"><div style="position:absolute;left:4.0px;top:5.0px;line-height:0"><svg width="14" height="14" viewBox="0 0 14 14"><path d="M0.3 13 V0.2 H5.6 L7.2 2.2 H13.7 V13 Z" fill="#c2c2c2"/><path d="M0.3 4.3 H13.7" stroke="#808080" stroke-width="0.7"/></svg></div></div>
<div class="bt" style="left:214px;top:229px;width:14px"><div style="position:absolute;left:2.0px;top:8.6px;line-height:0"><svg width="10" height="6" viewBox="0 0 10 6"><path d="M0.6 0.8 L5 5 L9.4 0.8" fill="none" stroke="#d8d8d8" stroke-width="1.1"/></svg></div></div>
<div class="sep" style="top:256.0px"></div>
<div class="cb" style="left:22px;top:263px"></div>
<div class="sep" style="top:283.0px"></div>
<div class="sl full" style="top:301.4px"></div>
<svg class="spin" style="left:200px;top:293px" width="10" height="15" viewBox="0 0 10 15"><path d="M1 4.7 L5 0.8 L9 4.7 M1 9.3 L5 13.2 L9 9.3" fill="none" stroke="#d6d6d6" stroke-width="1.1"/></svg>
<div class="sep" style="top:314.0px"></div>
<div class="cb" style="left:22px;top:321px"><svg width="14" height="14" viewBox="0 0 14 14"><path d="M3 7.2 L5.6 10.3 L11 2.8" fill="none" stroke="#fff" stroke-width="1.6"/></svg></div>
<svg class="abs" style="left:206px;top:355px" width="16" height="16" viewBox="0 0 16 16"><path d="M8 1 A7 7 0 1 1 1 8" fill="none" stroke="#bdbdbd" stroke-width="1.1"/><path d="M8 1 V8" stroke="#a4a4a4" stroke-width="1.5"/><circle cx="8" cy="8" r="2.1" fill="#c2c2c2"/><path d="M1.5 5.6 L2.6 5.9 M3 3.2 L3.9 3.9 M5.3 1.4 L5.6 2.5" stroke="#bdbdbd" stroke-width="1.1"/></svg>
<svg class="abs" style="left:226px;top:355px" width="16" height="16" viewBox="0 0 16 16"><path d="M3.7 1.7 Q6 0.8 8.5 2 Q11 3.5 11 7 L15 12.2 Q15.6 14 14 14.8 Q12.5 15.2 11.6 14.4 L7 10.3 Q4 10.6 2 8.6 Q0.8 7.2 1 5.6 L4.4 6.7 L6.6 5.4 L6.2 3.6 Z" fill="none" stroke="#c2c2c2" stroke-width="1.1" stroke-linejoin="round"/></svg>
<span class="ttl" style="left:60.6px;top:3.9px;font-size:10px;line-height:12px;color:#6f6f6f;transform:scaleX(0.8762)">Tool property [Refer other layers]</span>
<span class="t" style="left:7.0px;top:20.0px;font-size:12px;line-height:14px;color:#e4e4e4;transform:scaleX(0.8703)">Refer other layers</span>
<span class="t" style="left:40.0px;top:64.0px;font-size:12px;line-height:14px;color:#e4e4e4;transform:scaleX(0.8796)">Apply to connected pixels only</span>
<span class="t" style="left:40.0px;top:88.0px;font-size:12px;line-height:14px;color:#e4e4e4;transform:scaleX(0.8511)">Close gap</span>
<span class="t" style="left:54.0px;top:117.0px;font-size:12px;line-height:14px;color:#8c8c8c;transform:scaleX(0.8571)">Fill narrow areas</span>
<span class="t" style="left:22.0px;top:137.5px;font-size:12px;line-height:14px;color:#e4e4e4;transform:scaleX(0.9035)">Tolerance</span>
<span class="t" style="left:177.9px;top:143.5px;font-size:12px;line-height:14px;color:#e4e4e4;transform:scaleX(0.9849)">11.6</span>
<span class="t" style="left:40.0px;top:169.0px;font-size:12px;line-height:14px;color:#e4e4e4;transform:scaleX(0.8785)">Area scaling</span>
<span class="t" style="left:187.0px;top:177.0px;font-size:12px;line-height:14px;color:#e4e4e4;transform:scaleX(0.8982)">20</span>
<span class="t" style="left:37.0px;top:203.0px;font-size:12px;line-height:14px;color:#e4e4e4;transform:scaleX(0.8666)">Scaling mode</span>
<span class="t" style="left:40.0px;top:234.0px;font-size:12px;line-height:14px;color:#e4e4e4;transform:scaleX(0.8512)">Refer multiple</span>
<span class="t" style="left:40.0px;top:263.0px;font-size:12px;line-height:14px;color:#e4e4e4;transform:scaleX(0.8793)">Fill up to vector path</span>
<span class="t" style="left:22.0px;top:287.0px;font-size:12px;line-height:14px;color:#e4e4e4;transform:scaleX(0.8606)">Opacity</span>
<span class="t" style="left:180.9px;top:293.0px;font-size:12px;line-height:14px;color:#e4e4e4;transform:scaleX(0.9033)">100</span>
<span class="t" style="left:41.0px;top:321.0px;font-size:12px;line-height:14px;color:#e4e4e4;transform:scaleX(0.8445)">Anti-aliasing</span>
</div>
</body></html>
